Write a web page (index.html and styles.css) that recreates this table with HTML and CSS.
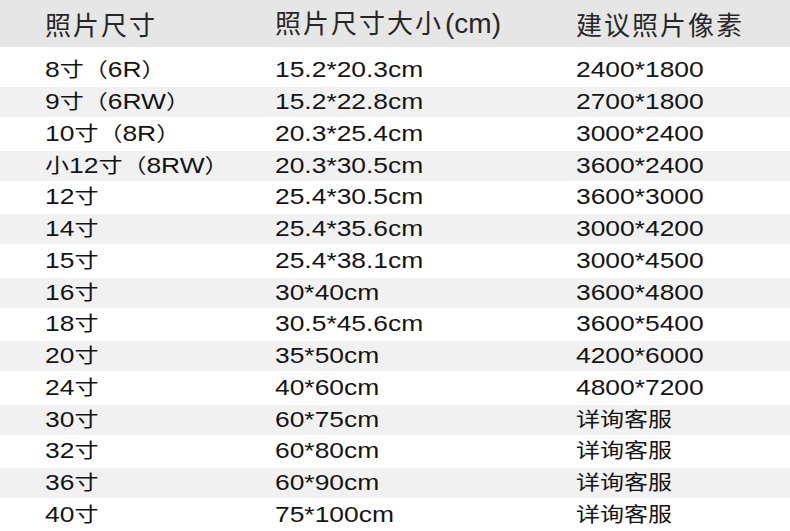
FILE: index.html
```html
<!DOCTYPE html>
<html lang="zh-CN">
<head>
<meta charset="utf-8">
<title>照片尺寸</title>
<link rel="stylesheet" href="styles.css">
</head>
<body>
<div class="sheet">
  <div class="head">
    <div class="hc">照片尺寸</div>
    <div class="hc">照片尺寸大小<span class="lat">(cm)</span></div>
    <div class="hc">建议照片像素</div>
  </div>
  <div class="body">
    <div class="row"><div class="c"><span class="t">8<span class="zh">寸（</span>6R<span class="zh">）</span></span></div><div class="c"><span class="t">15.2*20.3cm</span></div><div class="c"><span class="t">2400*1800</span></div></div>
    <div class="row"><div class="c"><span class="t">9<span class="zh">寸（</span>6RW<span class="zh">）</span></span></div><div class="c"><span class="t">15.2*22.8cm</span></div><div class="c"><span class="t">2700*1800</span></div></div>
    <div class="row"><div class="c"><span class="t">10<span class="zh">寸（</span>8R<span class="zh">）</span></span></div><div class="c"><span class="t">20.3*25.4cm</span></div><div class="c"><span class="t">3000*2400</span></div></div>
    <div class="row"><div class="c"><span class="t"><span class="zh">小</span>12<span class="zh">寸（</span>8RW<span class="zh">）</span></span></div><div class="c"><span class="t">20.3*30.5cm</span></div><div class="c"><span class="t">3600*2400</span></div></div>
    <div class="row"><div class="c"><span class="t">12<span class="zh">寸</span></span></div><div class="c"><span class="t">25.4*30.5cm</span></div><div class="c"><span class="t">3600*3000</span></div></div>
    <div class="row"><div class="c"><span class="t">14<span class="zh">寸</span></span></div><div class="c"><span class="t">25.4*35.6cm</span></div><div class="c"><span class="t">3000*4200</span></div></div>
    <div class="row"><div class="c"><span class="t">15<span class="zh">寸</span></span></div><div class="c"><span class="t">25.4*38.1cm</span></div><div class="c"><span class="t">3000*4500</span></div></div>
    <div class="row"><div class="c"><span class="t">16<span class="zh">寸</span></span></div><div class="c"><span class="t">30*40cm</span></div><div class="c"><span class="t">3600*4800</span></div></div>
    <div class="row"><div class="c"><span class="t">18<span class="zh">寸</span></span></div><div class="c"><span class="t">30.5*45.6cm</span></div><div class="c"><span class="t">3600*5400</span></div></div>
    <div class="row"><div class="c"><span class="t">20<span class="zh">寸</span></span></div><div class="c"><span class="t">35*50cm</span></div><div class="c"><span class="t">4200*6000</span></div></div>
    <div class="row"><div class="c"><span class="t">24<span class="zh">寸</span></span></div><div class="c"><span class="t">40*60cm</span></div><div class="c"><span class="t">4800*7200</span></div></div>
    <div class="row"><div class="c"><span class="t">30<span class="zh">寸</span></span></div><div class="c"><span class="t">60*75cm</span></div><div class="c"><span class="t"><span class="zh">详询客服</span></span></div></div>
    <div class="row"><div class="c"><span class="t">32<span class="zh">寸</span></span></div><div class="c"><span class="t">60*80cm</span></div><div class="c"><span class="t"><span class="zh">详询客服</span></span></div></div>
    <div class="row"><div class="c"><span class="t">36<span class="zh">寸</span></span></div><div class="c"><span class="t">60*90cm</span></div><div class="c"><span class="t"><span class="zh">详询客服</span></span></div></div>
    <div class="row"><div class="c"><span class="t">40<span class="zh">寸</span></span></div><div class="c"><span class="t">75*100cm</span></div><div class="c"><span class="t"><span class="zh">详询客服</span></span></div></div>
  </div>
</div>
</body>
</html>
```
FILE: styles.css
```css
html, body {
  margin: 0;
  padding: 0;
  background: #ffffff;
}

.sheet {
  width: 790px;
  height: 531px;
  overflow: hidden;
  font-family: "Liberation Sans", "Noto Sans CJK SC", sans-serif;
  color: #141414;
}

.head {
  display: grid;
  grid-template-columns: 230px 301px 1fr;
  padding-left: 45px;
  height: 47px;
  align-items: center;
  background: #e6e6e6;
}

.hc {
  font-family: "Noto Sans CJK SC", "Liberation Sans", sans-serif;
  font-size: 26px;
  letter-spacing: 2px;
  line-height: 1;
  color: #262626;
  white-space: nowrap;
}

.hc .lat {
  font-family: "Liberation Sans", sans-serif;
  font-size: 28px;
  letter-spacing: 0;
  margin-left: 2px;
}

.body {
  padding-top: 6.5px;
}

.row {
  display: grid;
  grid-template-columns: 230px 301px 1fr;
  padding-left: 45px;
  align-items: center;
  height: 33.5px;
}

.row:nth-child(even) {
  height: 30px;
  background: #f1f1f1;
}

.c {
  white-space: nowrap;
  line-height: 1;
}

.t {
  display: inline-block;
  font-size: 22px;
  transform: scaleX(1.2);
  transform-origin: left center;
}

.zh {
  font-family: "Noto Sans CJK SC", sans-serif;
  font-size: 20px;
}
```
